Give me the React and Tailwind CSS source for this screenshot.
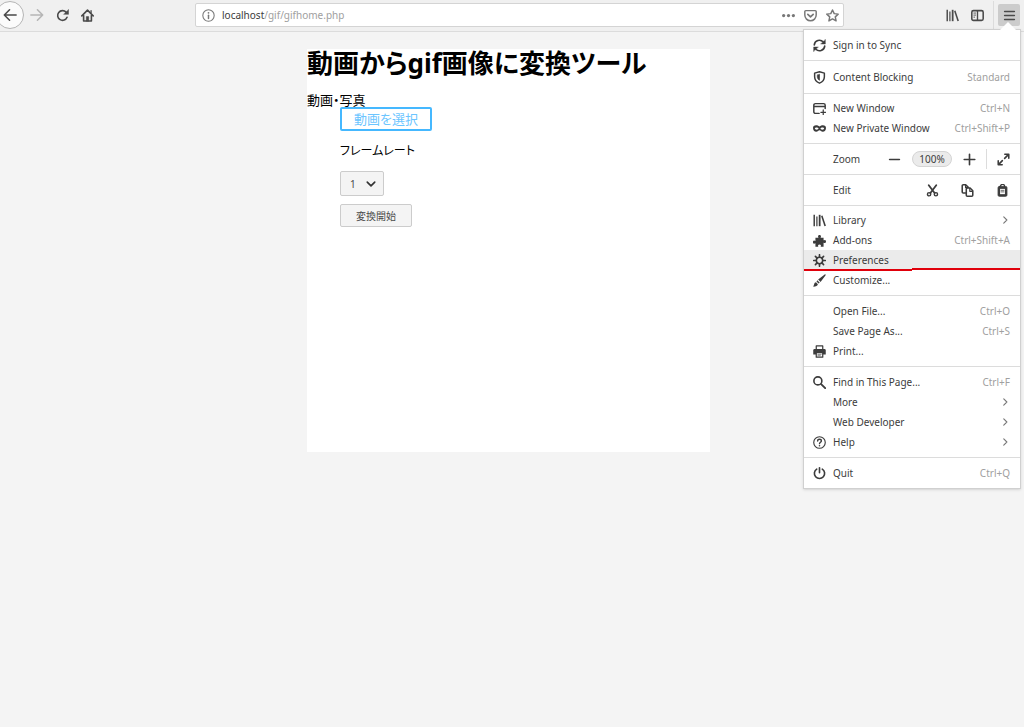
import React, { useState } from 'react';

const Icon = ({ children, size = 'size-[13px]', className = '' }) => (
  <svg
    viewBox="0 0 16 16"
    className={`${size} shrink-0 ${className}`}
    fill="none"
    stroke="currentColor"
    strokeWidth="1.8"
    strokeLinecap="round"
    strokeLinejoin="round"
    aria-hidden="true"
  >
    {children}
  </svg>
);

const BackIcon = () => (
  <Icon size="size-[14px]">
    <path d="M15 8H1.5M7.5 2 1.5 8l6 6" />
  </Icon>
);

const ForwardIcon = () => (
  <Icon size="size-[14px]">
    <path d="M1 8h13.5M8.5 2l6 6-6 6" />
  </Icon>
);

const ReloadIcon = () => (
  <Icon>
    <path d="M13.6 10.2A6 6 0 1 1 12.4 3.8" strokeWidth="2" />
    <path d="M15.4 1v5.6H9.8z" fill="currentColor" strokeWidth="0.6" />
  </Icon>
);

const HomeIcon = () => (
  <Icon>
    <path d="M1 8.4 8 1.4l7 7" strokeWidth="2" />
    <path d="M3.2 8v6.8h9.6V8" strokeWidth="2" />
    <path d="M6.6 14.6V9.4h2.8v5.2z" fill="currentColor" strokeWidth="0.8" />
    <path d="M12.4 2v2.6" strokeWidth="1.6" />
  </Icon>
);

const InfoIcon = () => (
  <Icon>
    <circle cx="8" cy="8" r="7" strokeWidth="1.3" />
    <path d="M8 7.6v4" strokeWidth="1.8" />
    <circle cx="8" cy="4.7" r="1.1" fill="currentColor" stroke="none" />
  </Icon>
);

const DotsIcon = () => (
  <Icon>
    <g fill="currentColor" stroke="none">
      <circle cx="2" cy="8" r="2" />
      <circle cx="8" cy="8" r="2" />
      <circle cx="14" cy="8" r="2" />
    </g>
  </Icon>
);

const PocketIcon = () => (
  <Icon>
    <path d="M2.2 2h11.6c.7 0 1.2.5 1.2 1.2v4.3a7 7 0 0 1-14 0V3.2C1 2.5 1.5 2 2.2 2z" strokeWidth="1.8" />
    <path d="M4.7 6.5 8 9.6l3.3-3.1" strokeWidth="2.1" />
  </Icon>
);

const StarIcon = () => (
  <Icon>
    <path d="m8 1.2 2.1 4.5 4.9.6-3.6 3.4 1 4.9L8 12.2l-4.4 2.4 1-4.9L1 6.3l4.900-.6z" strokeWidth="1.8" />
  </Icon>
);

const LibraryIcon = () => (
  <Icon>
    <g strokeLinecap="butt">
      <path d="M1.500 1v14" strokeWidth="1.8" />
      <path d="M4.8 3.2V15" strokeWidth="1.5" />
      <path d="M8.2 1v14" strokeWidth="2.2" />
      <path d="m10.8 2.200 4.2 12.6" strokeWidth="1.9" />
    </g>
  </Icon>
);

const SidebarIcon = () => (
  <Icon>
    <rect x="1" y="2" width="14" height="12" rx="2" strokeWidth="1.9" />
    <path d="M8 2.5v11" strokeWidth="1.7" />
    <path d="M3.5 5h2.2M3.5 7.5h2.2M3.5 10h1" strokeWidth="1.1" />
  </Icon>
);

const MenuIcon = () => (
  <Icon>
    <path d="M2 3h12M2 8h12M2 13h12" strokeWidth="1.9" />
  </Icon>
);

const SyncIcon = () => (
  <Icon>
    <path d="M1.6 7.2A6.3 6.3 0 0 1 12.6 3.7M14.4 8.8A6.3 6.3 0 0 1 3.4 12.3" strokeWidth="2" />
    <path d="M15.2.8v5.4H9.8zM.8 15.2V9.8h5.4z" fill="currentColor" strokeWidth="0.5" />
  </Icon>
);

const ShieldIcon = () => (
  <Icon>
    <path d="M8 1 14 2.6v4.6c0 3.6-2.4 6.400-6 7.800-3.600-1.400-6-4.200-6-7.800V2.600z" strokeWidth="1.8" />
    <path d="M8 4.4v7c-1.800-1-2.700-2.500-2.700-4.400V5.100z" fill="currentColor" strokeWidth="0.8" />
  </Icon>
);

const WindowIcon = () => (
  <Icon>
    <path d="M7.500 14H3a2 2 0 0 1-2-2V4a2 2 0 0 1 2-2h10a2 2 0 0 1 2 2v4M1.500 5.600h13" strokeWidth="1.8" />
    <path d="M12.6 9.800v5.800M9.700 12.700h5.800" strokeWidth="1.5" />
  </Icon>
);

const MaskIcon = () => (
  <Icon>
    <path
      d="M8 5.600C6.600 4.400 5.200 4 3.800 4 1.400 4 0 5.200 0 7.400 0 10.200 1.700 12 4 12c1.900 0 2.700-1.700 4-1.700s2.100 1.700 4 1.700c2.300 0 4-1.800 4-4.600C16 5.200 14.600 4 12.200 4c-1.400 0-2.800.4-4.200 1.600zM4.500 9.400C3.200 9.400 2.300 8.600 2.300 8s1-1.300 2.200-1.300S6.900 7.500 6.900 8.100 5.700 9.400 4.500 9.400zm7 0c-1.200 0-2.400-.7-2.400-1.300s1.200-1.400 2.400-1.400 2.200.7 2.200 1.300-.9 1.400-2.200 1.400z"
      fill="currentColor"
      fillRule="evenodd"
      stroke="none"
    />
  </Icon>
);

const ExpandIcon = () => (
  <Icon>
    <path d="M9.4 6.6 13 3M6.6 9.4 3 13" strokeWidth="2" />
    <path d="M9.6 1.500h4.900v4.900M6.400 14.500H1.500V9.600" strokeWidth="1.900" />
  </Icon>
);

const CutIcon = () => (
  <Icon>
    <path d="M3.400 1.500 10.600 11M12.600 1.500 5.400 11" strokeWidth="2.2" />
    <circle cx="3.8" cy="12.6" r="2" strokeWidth="1.8" />
    <circle cx="12.2" cy="12.6" r="2" strokeWidth="1.8" />
  </Icon>
);

const CopyIcon = () => (
  <Icon>
    <path d="M5.500 11H2.800A1.300 1.300 0 0 1 1.500 9.700V2.300C1.500 1.600 2.100 1 2.800 1h3L9 4" strokeWidth="1.9" />
    <path d="M5.600 1.400v3h2.600" strokeWidth="1.400" />
    <path d="M7.800 5h3.400l3.300 3.300v5.400c0 .7-.6 1.300-1.300 1.300H7.800c-.7 0-1.300-.6-1.300-1.300V6.300C6.500 5.600 7.100 5 7.800 5z" strokeWidth="1.9" />
    <path d="M10.800 5.400V9h3.400" strokeWidth="1.400" />
  </Icon>
);

const PasteIcon = () => (
  <Icon>
    <rect x="2.5" y="3" width="11" height="12.2" rx="1.6" fill="currentColor" strokeWidth="1" />
    <path d="M5.400 3a2.600 2.600 0 0 1 5.200 0" strokeWidth="1.600" />
    <path d="M5 6h6v6.500H5z" className="fill-white" stroke="none" />
    <path d="M6.200 7.800h3.600M6.200 9.700h3.600" strokeWidth="0.9" />
  </Icon>
);

const PuzzleIcon = () => (
  <Icon>
    <path
      d="M3 15.700V11.600c-.4-.5-.9.500-1.800.3C.4 11.700 0 10.900 0 10s.4-1.700 1.200-1.900C2.100 7.900 2.600 8.900 3 8.400V4.500h3.500c.5-.4-.5-.9-.3-1.900C6.400 1.700 7.200 1.200 8 1.200s1.700.5 1.800 1.400c.2 1-.7 1.500-.3 1.900H13v3.200c.4.500.9-.5 1.800-.3.800.2 1.200 1 1.200 1.900s-.4 1.700-1.200 1.900c-.9.200-1.400-.8-1.800-.3v4.800H9.600c-.5-.4.4-.8.200-1.600C9.600 13.400 8.900 13 8 13s-1.600.4-1.800 1.100c-.2.800.7 1.200.2 1.600z"
      fill="currentColor"
      stroke="none"
    />
  </Icon>
);

const GearIcon = () => (
  <Icon>
    <circle cx="8" cy="8" r="3.9" strokeWidth="1.9" />
    <path d="M8 .9v3M8 12.100v3M.9 8h3M12.100 8h3M3 3l2 2M11 11l2 2M3 13l2-2M11 5l2-2" strokeWidth="2" />
  </Icon>
);

const BrushIcon = () => (
  <Icon>
    <path
      d="M14.400.5c.6-.4 1.500.4 1.100 1.100L9.300 9.700 6.300 6.800zM5.400 7.800l2.900 2.900-1.500 1.100L4.300 9.300zM3.700 10.100l2.300 2.400c-.3 1.900-2.200 3.100-5.800 3.100C1.400 14.300 1 10.300 3.700 10.100z"
      fill="currentColor"
      stroke="none"
    />
  </Icon>
);

const PrintIcon = () => (
  <Icon>
    <path d="M4 5V1.200h8V5" strokeWidth="1.5" />
    <path d="M2 5h12a1.700 1.700 0 0 1 1.700 1.700v5H.3v-5A1.700 1.700 0 0 1 2 5z" fill="currentColor" stroke="none" />
    <path d="M4 9.500h8V15H4z" className="fill-white" strokeWidth="1.5" />
    <path d="M6 11.500h4M6 13.200h3" strokeWidth="0.8" />
  </Icon>
);

const SearchIcon = () => (
  <Icon>
    <circle cx="6" cy="6" r="4.9" strokeWidth="2" />
    <path d="m10 10 5 5" strokeWidth="2.3" />
  </Icon>
);

const HelpIcon = () => (
  <Icon>
    <circle cx="8" cy="8" r="7.1" strokeWidth="1.4" />
    <path d="M5.700 6.200C5.700 4.900 6.700 4 8 4s2.300.9 2.300 2.100c0 1.500-2.300 1.700-2.300 3.300" strokeWidth="1.7" />
    <circle cx="8" cy="12" r="1" fill="currentColor" stroke="none" />
  </Icon>
);

const QuitIcon = () => (
  <Icon>
    <path d="M4.600 2.600a6.300 6.300 0 1 0 6.800 0" strokeWidth="2" />
    <path d="M8 1v6" strokeWidth="2" />
  </Icon>
);

const ChevronIcon = () => (
  <Icon size="size-[10px]" className="text-[#777777]">
    <path d="m6 3 5 5-5 5" strokeWidth="1.8" />
  </Icon>
);

const ToolButton = ({ label, className = '', children }) => (
  <button type="button" aria-label={label} className={`flex h-6 w-6 items-center justify-center ${className}`}>
    {children}
  </button>
);

const MenuItem = ({ icon, label, hint, submenu, active }) => (
  <button
    type="button"
    className={`relative flex h-5 w-full items-center pl-[9px] pr-[10px] text-left ${active ? 'bg-[#ebebeb]' : 'hover:bg-[#ebebeb]'}`}
  >
    <span className="mr-[7px] w-[13px] shrink-0">{icon}</span>
    <span className="flex-1">{label}</span>
    {hint && <span className="text-[#a0a0a0]">{hint}</span>}
    {submenu && <ChevronIcon />}
    {active && (
      <span className="absolute inset-x-0 -bottom-px flex h-[3px] items-start">
        <span className="mt-px h-[2px] w-1/2 bg-[#e0000b]" />
        <span className="h-[2px] w-1/2 bg-[#e0000b]" />
      </span>
    )}
  </button>
);

const Section = ({ className = 'py-[5px]', children }) => (
  <div className={`border-b border-[#dcdcdc] last:border-b-0 ${className}`}>{children}</div>
);

const AppMenu = () => (
  <div className="absolute right-[3px] top-[29px] z-10 w-[218px] border border-[#d0d0d0] bg-white text-[10px] leading-5 text-[#3c3c3c] shadow-sm">
    <svg viewBox="0 0 16 8" className="absolute -top-2 right-1 h-2 w-4" aria-hidden="true">
      <path d="M0 8 8 0l8 8z" className="fill-white" />
    </svg>
    <Section>
      <MenuItem icon={<SyncIcon />} label="Sign in to Sync" />
    </Section>
    <Section className="py-[6px]">
      <MenuItem icon={<ShieldIcon />} label="Content Blocking" hint="Standard" />
    </Section>
    <Section className="pt-1 pb-[5px]">
      <MenuItem icon={<WindowIcon />} label="New Window" hint="Ctrl+N" />
      <MenuItem icon={<MaskIcon />} label="New Private Window" hint="Ctrl+Shift+P" />
    </Section>
    <Section>
      <div className="flex h-5 items-center pl-[29px]">
        <span className="flex-1">Zoom</span>
        <button type="button" aria-label="Zoom out" className="flex w-9 justify-center">
          <Icon>
            <path d="M2 8h12" strokeWidth="2" />
          </Icon>
        </button>
        <button type="button" className="h-4 w-10 rounded-full border border-[#d4d4d4] bg-[#ebebeb] leading-[14px]">
          100%
        </button>
        <button type="button" aria-label="Zoom in" className="flex w-[34px] justify-center">
          <Icon>
            <path d="M1.500 8h13M8 1.500v13" strokeWidth="2" />
          </Icon>
        </button>
        <button type="button" aria-label="Full screen" className="flex h-5 w-[34px] items-center justify-center border-l border-[#dcdcdc]">
          <ExpandIcon />
        </button>
      </div>
    </Section>
    <Section>
      <div className="flex h-5 items-center pl-[29px]">
        <span className="flex-1">Edit</span>
        <button type="button" aria-label="Cut" className="flex w-[35px] justify-center">
          <CutIcon />
        </button>
        <button type="button" aria-label="Copy" className="flex w-[35px] justify-center">
          <CopyIcon />
        </button>
        <button type="button" aria-label="Paste" className="flex w-[35px] justify-center">
          <PasteIcon />
        </button>
      </div>
    </Section>
    <Section className="pt-1 pb-[5px]">
      <MenuItem icon={<LibraryIcon />} label="Library" submenu />
      <MenuItem icon={<PuzzleIcon />} label="Add-ons" hint="Ctrl+Shift+A" />
      <MenuItem icon={<GearIcon />} label="Preferences" active />
      <MenuItem icon={<BrushIcon />} label="Customize..." />
    </Section>
    <Section>
      <MenuItem label="Open File..." hint="Ctrl+O" />
      <MenuItem label="Save Page As..." hint="Ctrl+S" />
      <MenuItem icon={<PrintIcon />} label="Print..." />
    </Section>
    <Section>
      <MenuItem icon={<SearchIcon />} label="Find in This Page..." hint="Ctrl+F" />
      <MenuItem label="More" submenu />
      <MenuItem label="Web Developer" submenu />
      <MenuItem icon={<HelpIcon />} label="Help" submenu />
    </Section>
    <Section>
      <MenuItem icon={<QuitIcon />} label="Quit" hint="Ctrl+Q" />
    </Section>
  </div>
);

const Toolbar = () => (
  <header className="relative flex h-8 items-center border-b border-[#dcdcdc] bg-[#f0f0f0] pr-1 pb-px text-[#4a4a4a]">
    <nav className="flex items-center gap-px">
      <button
        type="button"
        aria-label="Back"
        className="-ml-1 flex size-7 items-center justify-center rounded-full border border-[#b5b5b5] bg-[#fbfbfb]"
      >
        <BackIcon />
      </button>
      <ToolButton label="Forward" className="text-[#b5b5b5]">
        <ForwardIcon />
      </ToolButton>
      <ToolButton label="Reload">
        <ReloadIcon />
      </ToolButton>
      <ToolButton label="Home">
        <HomeIcon />
      </ToolButton>
    </nav>
    <div className="mx-24 flex h-6 flex-1 items-center rounded-xs border border-[#d4d4d4] bg-white pl-[6px] pr-1 text-[10px] text-[#777777]">
      <InfoIcon />
      <p className="ml-[7px] flex-1 text-[#a0a0a0]">
        <span className="text-[#3c3c3c]">localhost</span>/gif/gifhome.php
      </p>
      <div className="flex items-center gap-[9px]">
        <button type="button" aria-label="Page actions"><DotsIcon /></button>
        <button type="button" aria-label="Save to Pocket"><PocketIcon /></button>
        <button type="button" aria-label="Bookmark this page"><StarIcon /></button>
      </div>
    </div>
    <div className="flex items-center">
      <ToolButton label="Library"><LibraryIcon /></ToolButton>
      <ToolButton label="Sidebars" className="ml-px"><SidebarIcon /></ToolButton>
      <span className="mx-1 h-7 w-px bg-[#dcdcdc]" />
      <button
        type="button"
        aria-label="Open menu"
        className="flex h-[22px] w-[22px] items-center justify-center rounded-xs bg-[#cccccc]"
      >
        <MenuIcon />
      </button>
    </div>
    <AppMenu />
  </header>
);

const Converter = () => {
  const [rate, setRate] = useState('1');

  return (
    <main className="pt-[17px] pr-[7px] font-['Noto_Sans','Noto_Sans_CJK_JP',sans-serif] text-[13px] leading-4 text-black [font-feature-settings:'palt']">
      <div className="mx-auto min-h-[403px] w-[403px] bg-white">
        <h1 className="text-[26px] font-bold leading-7">動画からgif画像に変換ツール</h1>
        <p className="mt-4 leading-[14px]">動画・写真</p>
        <form className="flex flex-col items-start pl-[33px]" onSubmit={(e) => e.preventDefault()}>
          <button type="button" className="h-6 rounded-xs border-2 border-[#45b8ff] px-3 leading-5 text-[#6cc5ff]">
            動画を選択
          </button>
          <label htmlFor="rate" className="mt-3 text-[12px] leading-4">フレームレート</label>
          <div className="mt-3 grid">
            <select
              id="rate"
              value={rate}
              onChange={(e) => setRate(e.target.value)}
              className="col-start-1 row-start-1 h-[25px] w-11 appearance-none rounded-xs border border-[#cccccc] bg-[#f4f4f4] pl-[9px] text-[10px] text-[#4a4a4a]"
            >
              <option value="1">1</option>
              <option value="5">5</option>
              <option value="10">10</option>
            </select>
            <Icon size="size-[10px]" className="pointer-events-none col-start-1 row-start-1 mr-2 self-center justify-self-end text-[#333333]">
              <path d="m2 5 6 6 6-6" strokeWidth="2.6" />
            </Icon>
          </div>
          <button type="submit" className="mt-2 h-[23px] rounded-xs border border-[#cccccc] bg-[#f4f4f4] px-[15px] text-[10px] text-[#4a4a4a]">
            変換開始
          </button>
        </form>
      </div>
    </main>
  );
};

const App = () => (
  <div className="min-h-screen bg-[#f4f4f4] font-['Noto_Sans',sans-serif]">
    <Toolbar />
    <Converter />
  </div>
);

export default App;
